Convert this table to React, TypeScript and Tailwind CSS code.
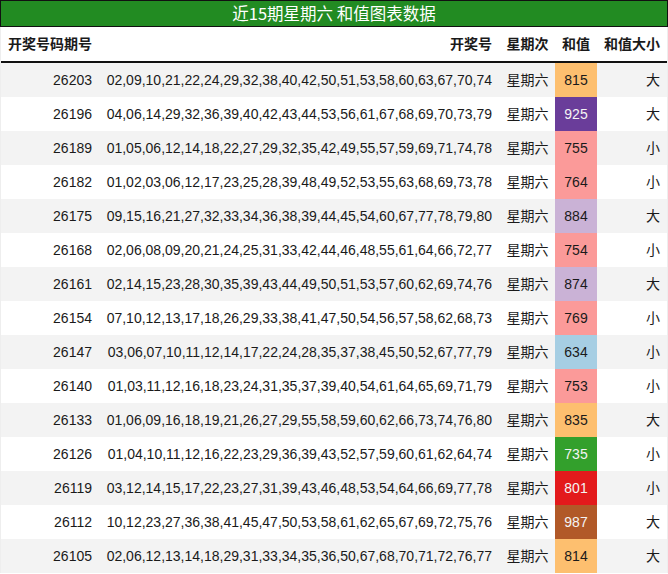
import React from "react";

type Row = { id: string; nums: string; sum: number; size: string; bg: string; light?: boolean };

const rows: Row[] = [
  { id: "26203", nums: "02,09,10,21,22,24,29,32,38,40,42,50,51,53,58,60,63,67,70,74", sum: 815, size: "大", bg: "bg-[#fdbf6f]" },
  { id: "26196", nums: "04,06,14,29,32,36,39,40,42,43,44,53,56,61,67,68,69,70,73,79", sum: 925, size: "大", bg: "bg-[#6a3d9a]", light: true },
  { id: "26189", nums: "01,05,06,12,14,18,22,27,29,32,35,42,49,55,57,59,69,71,74,78", sum: 755, size: "小", bg: "bg-[#fb9a99]" },
  { id: "26182", nums: "01,02,03,06,12,17,23,25,28,39,48,49,52,53,55,63,68,69,73,78", sum: 764, size: "小", bg: "bg-[#fb9a99]" },
  { id: "26175", nums: "09,15,16,21,27,32,33,34,36,38,39,44,45,54,60,67,77,78,79,80", sum: 884, size: "大", bg: "bg-[#cab2d6]" },
  { id: "26168", nums: "02,06,08,09,20,21,24,25,31,33,42,44,46,48,55,61,64,66,72,77", sum: 754, size: "小", bg: "bg-[#fb9a99]" },
  { id: "26161", nums: "02,14,15,23,28,30,35,39,43,44,49,50,51,53,57,60,62,69,74,76", sum: 874, size: "大", bg: "bg-[#cab2d6]" },
  { id: "26154", nums: "07,10,12,13,17,18,26,29,33,38,41,47,50,54,56,57,58,62,68,73", sum: 769, size: "小", bg: "bg-[#fb9a99]" },
  { id: "26147", nums: "03,06,07,10,11,12,14,17,22,24,28,35,37,38,45,50,52,67,77,79", sum: 634, size: "小", bg: "bg-[#a6cee3]" },
  { id: "26140", nums: "01,03,11,12,16,18,23,24,31,35,37,39,40,54,61,64,65,69,71,79", sum: 753, size: "小", bg: "bg-[#fb9a99]" },
  { id: "26133", nums: "01,06,09,16,18,19,21,26,27,29,55,58,59,60,62,66,73,74,76,80", sum: 835, size: "大", bg: "bg-[#fdbf6f]" },
  { id: "26126", nums: "01,04,10,11,12,16,22,23,29,36,39,43,52,57,59,60,61,62,64,74", sum: 735, size: "小", bg: "bg-[#33a02c]", light: true },
  { id: "26119", nums: "03,12,14,15,17,22,23,27,31,39,43,46,48,53,54,64,66,69,77,78", sum: 801, size: "小", bg: "bg-[#e31a1c]", light: true },
  { id: "26112", nums: "10,12,23,27,36,38,41,45,47,50,53,58,61,62,65,67,69,72,75,76", sum: 987, size: "大", bg: "bg-[#b15928]", light: true },
  { id: "26105", nums: "02,06,12,13,14,18,29,31,33,34,35,36,50,67,68,70,71,72,76,77", sum: 814, size: "大", bg: "bg-[#fdbf6f]" },
];

const cols = "grid grid-cols-[99px_400px_55px_42px_70px]";

export default function App() {
  return (
    <div className="w-[668px] h-[574px] overflow-hidden bg-white text-[#1a1a1a] font-['Liberation_Sans','Noto_Sans_CJK_SC',sans-serif]">
      <div className="h-[27px] bg-[#228b22] border border-[#111] flex items-center justify-center text-white text-[16.5px] font-['Noto_Sans_CJK_SC',sans-serif]">
        近15期星期六 和值图表数据
      </div>
      <div className="border-x border-[#eeeeee]">
        <div className={`${cols} h-[36px] border-b-2 border-[#111] items-center text-[14px] font-bold`}>
          <div className="pl-[7px]">开奖号码期号</div>
          <div className="text-right pr-2">开奖号</div>
          <div className="text-center">星期次</div>
          <div className="text-center">和值</div>
          <div className="text-right pr-[7px]">和值大小</div>
        </div>
        {rows.map((r, i) => (
          <div key={r.id} className={`${cols} h-[34px] items-stretch text-[14px] ${i % 2 === 0 ? "bg-[#f3f3f3]" : "bg-white"}`}>
            <div className="flex items-center justify-end pr-2">{r.id}</div>
            <div className="flex items-center justify-end pr-2">{r.nums}</div>
            <div className="flex items-center justify-center">星期六</div>
            <div className={`flex items-center justify-center ${r.bg} ${r.light ? "text-[#f4f4f4]" : ""}`}>{r.sum}</div>
            <div className="flex items-center justify-end pr-[7px]">{r.size}</div>
          </div>
        ))}
      </div>
    </div>
  );
}
